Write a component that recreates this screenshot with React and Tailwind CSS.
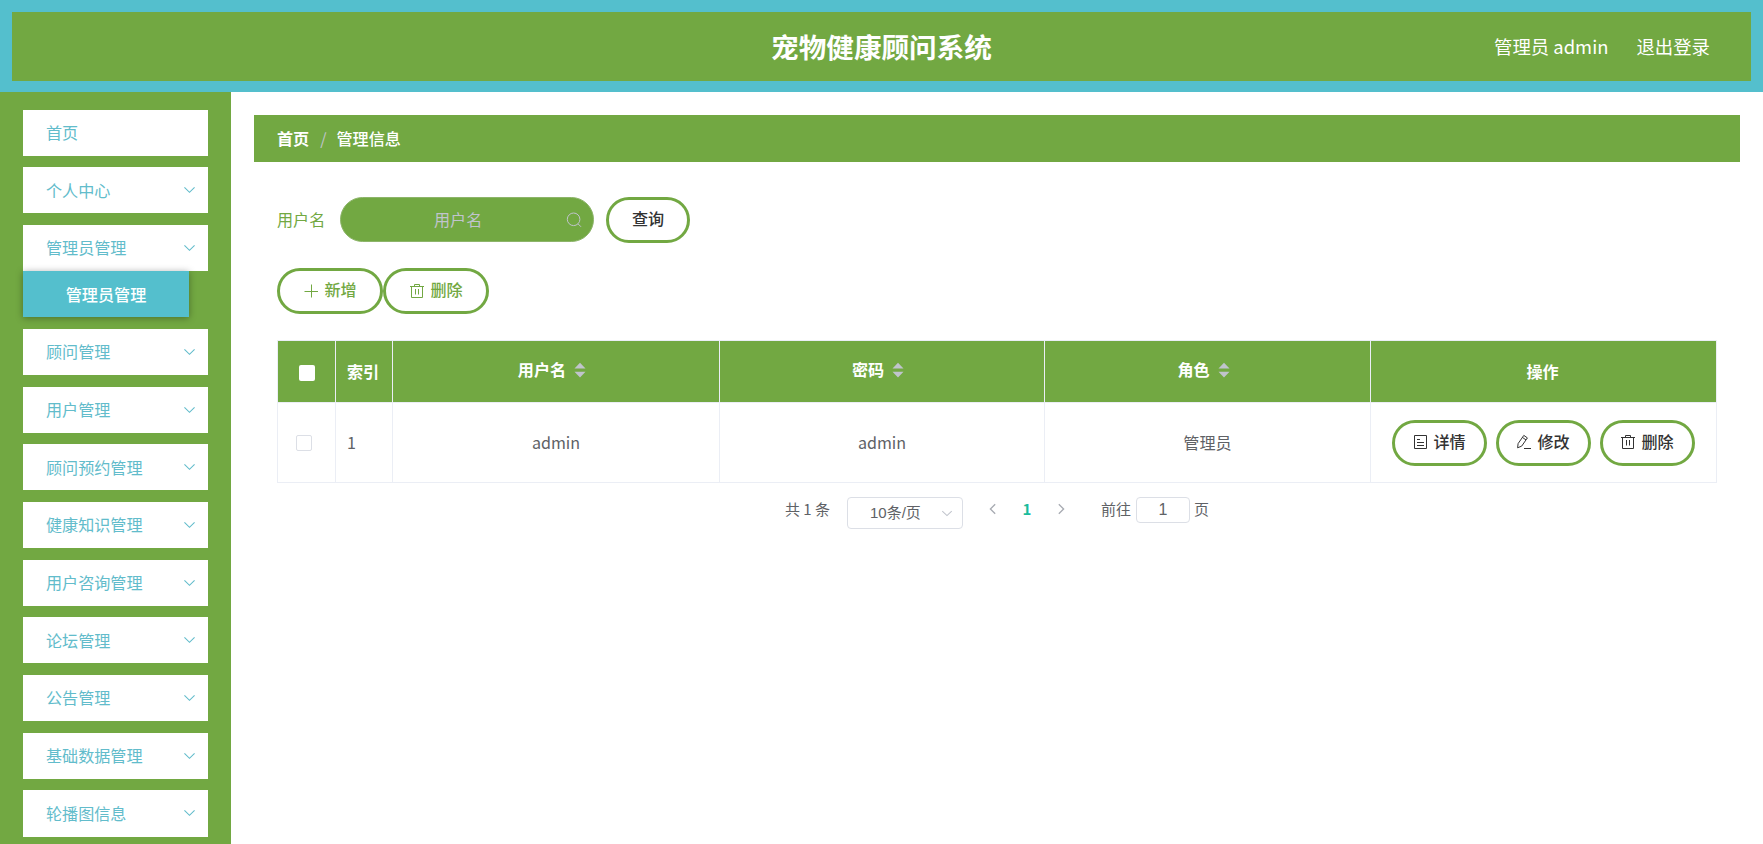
import React from 'react';
import clsx from 'clsx';

const menus = [
  { title: '首页' },
  { title: '个人中心', arrow: true },
  { title: '管理员管理', arrow: true, child: '管理员管理' },
  { title: '顾问管理', arrow: true },
  { title: '用户管理', arrow: true },
  { title: '顾问预约管理', arrow: true },
  { title: '健康知识管理', arrow: true },
  { title: '用户咨询管理', arrow: true },
  { title: '论坛管理', arrow: true },
  { title: '公告管理', arrow: true },
  { title: '基础数据管理', arrow: true },
  { title: '轮播图信息', arrow: true },
];

function Icon({ className, children }) {
  return (
    <svg viewBox="0 0 16 16" fill="none" stroke="currentColor" className={clsx('shrink-0', className)}>
      {children}
    </svg>
  );
}

const ChevronDown = ({ className }) => (
  <Icon className={className}><path d="M2.6 5.8L8 11l5.4-5.2" strokeWidth="1.2" /></Icon>
);

const PlusIcon = () => (
  <Icon className="w-4 h-4 mt-0.5"><path d="M8.500 1.500v13M1.500 8.500h13.500" /></Icon>
);

const TrashIcon = () => (
  <Icon className="w-4 h-4 mt-0.5">
    <path d="M1 3.5h14M5.500 3.500v-2h5v2M2.500 3.500v11h11v-11M6.500 6v5.500M9.500 6v5.500" />
  </Icon>
);

const DocIcon = () => (
  <Icon className="w-4 h-4 mt-0.5">
    <path d="M2.500 1.500h12v13h-12zM5 5.500h3M5 8.500h7M5 11.500h7" />
  </Icon>
);

const EditIcon = () => (
  <Icon className="w-4 h-4 mt-0.5">
    <path d="M1.600 13.800l.5-4.200L7.800 1.400l3.600 2.500-5.700 8.200zM6.400 3.400l3.600 2.500M8 14.500h7" />
  </Icon>
);

const SearchIcon = () => (
  <Icon className="w-4 h-4">
    <circle cx="7.6" cy="7.3" r="6.3" />
    <path d="M12 11.8l3 3" />
  </Icon>
);

function PillButton({ className, icon, children }) {
  return (
    <button
      className={clsx(
        'h-[46px] rounded-full border-[3px] border-[#72a842] bg-white flex items-center justify-center gap-[5px] pb-[3px] font-medium',
        className
      )}
    >
      {icon}
      <span>{children}</span>
    </button>
  );
}

function Header() {
  return (
    <header className="h-[92px] p-3 pb-[11px] bg-[#54bfcd]">
      <div className="h-[69px] bg-[#72a842] text-white grid grid-cols-3 items-center">
        <div />
        <h1 className="text-[27.6px] font-bold text-center leading-none pt-px">宠物健康顾问系统</h1>
        <div className="flex justify-end gap-[28px] pr-[41px] text-[18.4px] leading-none">
          <span>管理员 admin</span>
          <span>退出登录</span>
        </div>
      </div>
    </header>
  );
}

function Sidebar() {
  return (
    <aside className="w-[231px] shrink-0 bg-[#72a842] pt-[17.6px] pl-[23px] overflow-hidden">
      {menus.map((item) => (
        <div key={item.title} className="mb-[11.5px] w-[185px]">
          <div className="h-[46.2px] bg-white text-[#62bccb] flex items-center justify-between pl-[23px] pr-[11px] pb-px">
            <span>{item.title}</span>
            {item.arrow && <ChevronDown className="w-[15px] h-[15px]" />}
          </div>
          {item.child && (
            <div className="h-[46.2px] w-[166px] bg-[#54bfcd] text-white font-medium flex items-center justify-center shadow-[0_1px_7px_rgba(0,0,0,0.35)]">
              {item.child}
            </div>
          )}
        </div>
      ))}
    </aside>
  );
}

function SortCarets() {
  return (
    <svg viewBox="0 0 12 16" fill="#c0c4cc" className="w-3 h-4 ml-2 mr-2">
      <path d="M0.5 6.4L6 0.8l5.5 5.600zM0.5 9.800L6 15.400l5.500-5.600z" />
    </svg>
  );
}

function HeadCell({ className, sortable, children }) {
  return (
    <div
      className={clsx(
        'border-l border-[#ebeef5] flex items-center justify-center',
        sortable && 'pb-[4px]',
        className
      )}
    >
      {children}
      {sortable && <SortCarets />}
    </div>
  );
}

function Cell({ className, children }) {
  return (
    <div className={clsx('border-l border-[#ebeef5] flex items-center', className)}>{children}</div>
  );
}

function AdminTable() {
  return (
    <div className="mt-[26px] w-[1440px] border-r border-[#ebeef5]">
      <div className="grid grid-cols-[58px_57px_327px_325px_326px_346px] h-[63px] border-y border-[#ebeef5] bg-[#72a842] text-white font-bold">
        <HeadCell className="pt-0.5">
          <span className="w-4 h-4 rounded-[2px] bg-white" />
        </HeadCell>
        <HeadCell className="pr-[2px]">索引</HeadCell>
        <HeadCell sortable>用户名</HeadCell>
        <HeadCell sortable>密码</HeadCell>
        <HeadCell sortable>角色</HeadCell>
        <HeadCell className="pr-[2px]">操作</HeadCell>
      </div>
      <div className="grid grid-cols-[58px_57px_327px_325px_326px_346px] h-20 border-b border-[#ebeef5] text-[#606266]">
        <Cell className="pl-[18px]">
          <span className="w-4 h-4 rounded-[2px] border border-[#dcdfe6] bg-white" />
        </Cell>
        <Cell className="pl-[11px]">1</Cell>
        <Cell className="justify-center">admin</Cell>
        <Cell className="justify-center">admin</Cell>
        <Cell className="justify-center">管理员</Cell>
        <Cell className="justify-center gap-[9px] pr-px text-[#333]">
          <PillButton className="w-[95px]" icon={<DocIcon />}>详情</PillButton>
          <PillButton className="w-[95px]" icon={<EditIcon />}>修改</PillButton>
          <PillButton className="w-[95px]" icon={<TrashIcon />}>删除</PillButton>
        </Cell>
      </div>
    </div>
  );
}

function Pagination() {
  return (
    <div className="mt-[13px] pl-[508px] flex items-start text-[15px] leading-[26px] text-[#606266]">
      <span className="w-[62px]">共 1 条</span>
      <div className="mt-px w-[116px] h-8 border border-[#dcdfe6] rounded-[4px] flex items-center justify-between pl-[22px] pr-2 font-['Liberation_Sans','Noto_Sans_CJK_SC',sans-serif]">
        <span>10条/页</span>
        <ChevronDown className="w-[14px] h-[14px] text-[#c0c4cc]" />
      </div>
      <Icon className="w-[14px] h-[14px] ml-[23px] mt-[6px] text-[#a8abb2]">
        <path d="M10.500 2.500L5 8l5.500 5.500" strokeWidth="1.500" />
      </Icon>
      <span className="w-[54px] text-center font-bold text-[#1abc9c]">1</span>
      <Icon className="w-[14px] h-[14px] mt-[6px] text-[#a8abb2]">
        <path d="M5.500 2.500L11 8l-5.500 5.500" strokeWidth="1.500" />
      </Icon>
      <span className="ml-[33px]">前往</span>
      <div className="ml-[5px] mt-px w-[54px] h-[26px] border border-[#dcdfe6] rounded-[4px] text-center text-base leading-[24px] font-['Liberation_Sans',sans-serif]">
        1
      </div>
      <span className="ml-1">页</span>
    </div>
  );
}

export default function App() {
  return (
    <div className="h-[844px] overflow-hidden bg-white flex flex-col text-[16.1px] leading-normal font-['Noto_Sans_CJK_SC',sans-serif]">
      <Header />
      <div className="flex flex-1 min-h-0">
        <Sidebar />
        <main className="flex-1 pt-[23px] pl-[23px] pr-[23px]">
          {/* Breadcrumb */}
          <div className="h-[47px] bg-[#72a842] text-white flex items-center pl-[23px]">
            <span className="font-bold">首页</span>
            <span className="ml-[11px] mr-[10px] text-[#c0c4cc]">/</span>
            <span className="font-medium">管理信息</span>
          </div>

          <div className="pl-[23px]">
            {/* Search form */}
            <div className="mt-[34px] flex items-center h-[47px]">
              <span className="text-[#72a842] w-[63px]">用户名</span>
              <div className="w-[254px] h-[45px] rounded-full bg-[#72a842] border border-[#8db56a] text-[#c0c4cc] flex items-center pl-[93px] pr-[11px] justify-between">
                <span>用户名</span>
                <SearchIcon />
              </div>
              <PillButton className="w-[84px] ml-3 text-[#333]">查询</PillButton>
            </div>

            {/* Toolbar */}
            <div className="mt-[25px] flex text-[#72a842]">
              <PillButton className="w-[106px]" icon={<PlusIcon />}>新增</PillButton>
              <PillButton className="w-[106px]" icon={<TrashIcon />}>删除</PillButton>
            </div>

            <AdminTable />
            <Pagination />
          </div>
        </main>
      </div>
    </div>
  );
}
